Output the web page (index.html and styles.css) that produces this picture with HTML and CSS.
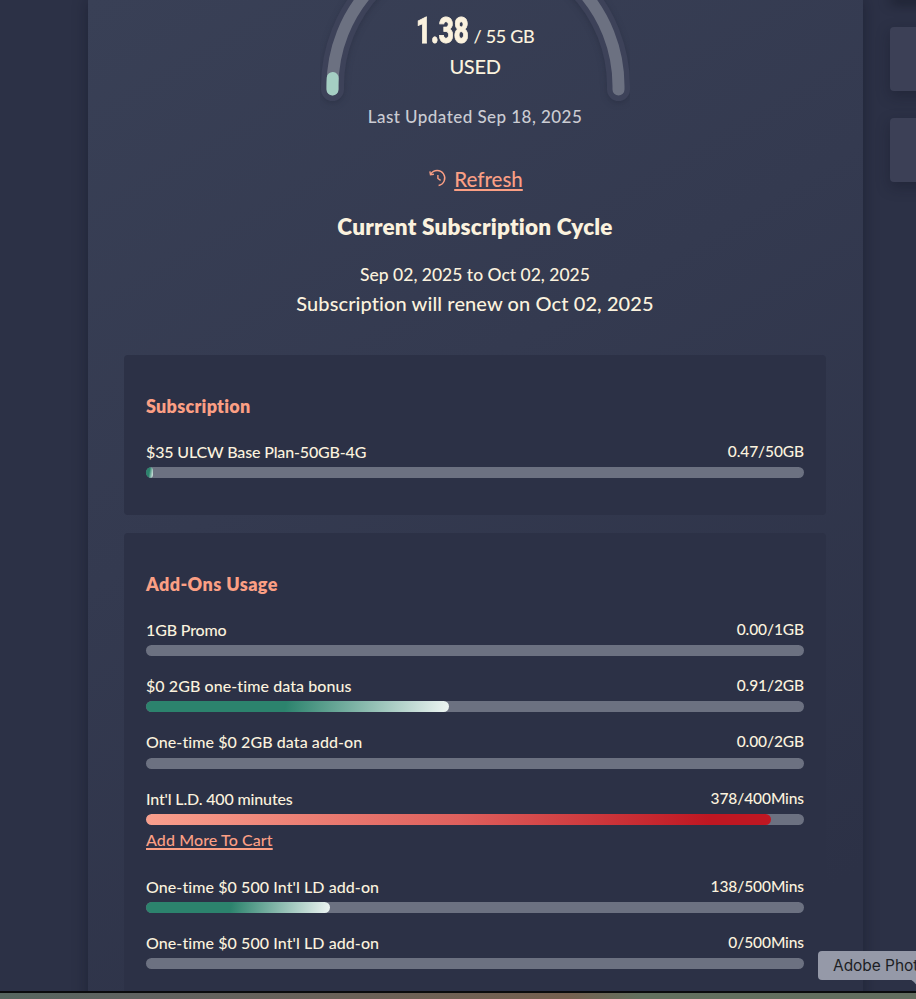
FILE: index.html
```
<!DOCTYPE html>
<html lang="en">
<head>
  <meta charset="utf-8">
  <title>Data Usage</title>
  <link rel="stylesheet" href="styles.css">
</head>
<body>
  <main class="page">
    <div class="usage-card">

      <!-- Gauge -->
      <section class="gauge">
        <svg class="gauge-arc" width="310" height="110" viewBox="0 0 310 110">
          <path class="arc-outline" d="M12.500 89.500 V86 A143 143 0 0 1 298.500 86 V89.500"/>
          <path class="arc-track" d="M12.500 89.500 V86 A143 143 0 0 1 298.500 86 V89.500"/>
          <path class="arc-value" d="M12.500 89.500 V86 A143 143 0 0 1 12.700 78"/>
        </svg>
        <div class="gauge-text">
          <div class="gauge-amount"><span class="gauge-used"><b>1.38</b></span><span class="gauge-total">/ 55 GB</span></div>
          <div class="gauge-label">USED</div>
        </div>
      </section>

      <p class="updated">Last Updated Sep 18, 2025</p>

      <div class="refresh">
        <svg width="18" height="18" viewBox="0 0 18 18">
          <path d="M1.800 4.900 A7.600 7.600 0 1 1 9.600 16.500"/>
          <path d="M0.900 2.300 L1.500 5.700 L4.900 5.200"/>
          <path d="M8.900 6 V9.500 L11.600 11.300"/>
        </svg>
        <a class="refresh-link">Refresh</a>
      </div>

      <h2 class="cycle-title">Current Subscription Cycle</h2>
      <p class="cycle-dates">Sep 02, 2025 to Oct 02, 2025</p>
      <p class="cycle-renew">Subscription will renew on Oct 02, 2025</p>

      <!-- Subscription -->
      <section class="panel panel-plan">
        <h3>Subscription</h3>
        <div class="usage">
          <div class="usage-text"><span class="name tight">$35 ULCW Base Plan-50GB-4G</span><span class="value">0.47/50GB</span></div>
          <div class="bar"><div class="fill green" style="width: 1%"></div></div>
        </div>
      </section>

      <!-- Add-ons -->
      <section class="panel panel-addons">
        <h3>Add-Ons Usage</h3>
        <div class="usage">
          <div class="usage-text"><span class="name tight">1GB Promo</span><span class="value">0.00/1GB</span></div>
          <div class="bar"></div>
        </div>
        <div class="usage">
          <div class="usage-text"><span class="name">$0 2GB one-time data bonus</span><span class="value">0.91/2GB</span></div>
          <div class="bar"><div class="fill green" style="width: 46%"></div></div>
        </div>
        <div class="usage">
          <div class="usage-text"><span class="name">One-time $0 2GB data add-on</span><span class="value">0.00/2GB</span></div>
          <div class="bar"></div>
        </div>
        <div class="usage usage-link">
          <div class="usage-text"><span class="name tight">Int'l L.D. 400 minutes</span><span class="value">378/400Mins</span></div>
          <div class="bar"><div class="fill red" style="width: 95%"></div></div>
          <a class="add-more">Add More To Cart</a>
        </div>
        <div class="usage">
          <div class="usage-text"><span class="name">One-time $0 500 Int'l LD add-on</span><span class="value">138/500Mins</span></div>
          <div class="bar"><div class="fill green" style="width: 28%"></div></div>
        </div>
        <div class="usage">
          <div class="usage-text"><span class="name">One-time $0 500 Int'l LD add-on</span><span class="value">0/500Mins</span></div>
          <div class="bar"></div>
        </div>
      </section>
    </div>

    <aside class="side">
      <div class="side-card side-top"></div>
      <div class="side-card"></div>
      <div class="side-card"></div>
    </aside>
  </main>

  <div class="desktop-edge"></div>
  <div class="dock-tip">Adobe Phot
    <svg class="dock-tip-arrow" width="14" height="10" viewBox="0 0 14 10"><path d="M0 0 H14 V10 Q10 8 6 3 Q3 0 0 0 Z"/></svg>
  </div>
</body>
</html>
```
FILE: styles.css
```
* {
  box-sizing: border-box;
}

body {
  margin: 0;
  height: 999px;
  overflow: hidden;
  position: relative;
  background-color: #2c3146;
  color: #fbf2de;
  font-family: Lato, "Open Sans", sans-serif;
  font-weight: 500;
  font-variant-ligatures: none;
}

h2, h3, p {
  margin: 0;
}

.page {
  display: flex;
  height: 991px;
  padding-left: 88px;
  overflow: hidden;
}

.usage-card {
  width: 775px;
  height: 1100px;
  flex-shrink: 0;
  padding: 0 37px 0 36px;
  text-align: center;
  background: linear-gradient(150deg, #394056 0%, #343a50 38%, #2c3146 85%);
  box-shadow: 0 0 14px rgba(10, 14, 28, 0.38);
}

/* Gauge */
.gauge {
  display: grid;
  justify-content: center;
  height: 104px;
}
.gauge-arc,
.gauge-text {
  grid-area: 1 / 1;
}
.gauge-arc path {
  fill: none;
  stroke-linecap: round;
}
.gauge-arc .arc-outline {
  stroke: #3d4259;
  stroke-width: 23;
  filter: drop-shadow(0 2px 3px rgba(20, 24, 40, 0.25));
}
.gauge-arc .arc-track {
  stroke: #6c7181;
  stroke-width: 12;
}
.gauge-arc .arc-value {
  stroke: #a5cfc3;
  stroke-width: 12;
}
.gauge-text {
  padding-top: 8px;
}
.gauge-amount {
  display: flex;
  justify-content: center;
  align-items: baseline;
  gap: 6px;
  height: 46px;
  line-height: 45px;
}
.gauge-used {
  width: 52px;
}
.gauge-used b {
  display: inline-block;
  font-family: Roboto, sans-serif;
  font-weight: 900;
  font-size: 37px;
  transform: scaleX(0.7);
  transform-origin: left;
  -webkit-text-stroke: 0.8px #fbf2de;
}
.gauge-total {
  font-size: 18px;
  letter-spacing: -0.3px;
}
.gauge-label {
  font-size: 20px;
  letter-spacing: -0.3px;
  line-height: 25px;
}

.updated {
  height: 26px;
  line-height: 25px;
  font-size: 17px;
  letter-spacing: 0.45px;
  color: #cbccd3;
}

.refresh {
  display: flex;
  justify-content: center;
  gap: 7px;
  margin-top: 35px;
  height: 29px;
  padding-left: 2px;
  line-height: 28px;
  font-size: 20.5px;
  color: #fb9f84;
}
.refresh svg {
  margin-top: 4px;
  fill: none;
  stroke: #fb9f84;
  stroke-width: 1.4;
}
.refresh-link,
.add-more {
  text-decoration: underline;
  text-decoration-thickness: 1.5px;
  text-underline-offset: 2px;
}

.cycle-title {
  margin-top: 18px;
  height: 30px;
  line-height: 30px;
  font-size: 22.5px;
  font-weight: 800;
  letter-spacing: 0.2px;
}
.cycle-dates {
  margin-top: 20px;
  height: 26px;
  line-height: 26px;
  font-size: 17.5px;
}
.cycle-renew {
  height: 32px;
  line-height: 30px;
  font-size: 20px;
  letter-spacing: 0.1px;
}

/* Usage panels */
.panel {
  padding: 39px 22px 0;
  text-align: left;
  background-color: #2c3146;
  border-radius: 4px;
}
.panel-plan {
  margin-top: 35px;
  height: 160px;
}
.panel-addons {
  margin-top: 18px;
  height: 520px;
}
.panel h3 {
  height: 24px;
  line-height: 24px;
  margin-bottom: 22px;
  font-size: 18px;
  font-weight: 800;
  letter-spacing: 0.25px;
  color: #fb9f84;
}
.panel-addons h3 {
  letter-spacing: 0.4px;
}
.usage {
  height: 56.200px;
}
.usage-link {
  height: 88.400px;
}
.usage-text {
  display: flex;
  justify-content: space-between;
  height: 27.300px;
  line-height: 23px;
  font-size: 16px;
}
.name {
  letter-spacing: 0.08px;
}
.name.tight {
  letter-spacing: -0.15px;
}
.value {
  font-size: 15.5px;
  letter-spacing: -0.1px;
}
.bar {
  height: 11px;
  border-radius: 6px;
  background-color: #6c7181;
  overflow: hidden;
}
.fill {
  height: 100%;
  border-radius: 6px;
}
.green {
  background: linear-gradient(100deg, #2c836d 46%, #edf4f2 100%);
}
.red {
  background: linear-gradient(90deg, #f99f8d 0%, #df605d 50%, #bf1722 90%);
}
.add-more {
  display: inline-block;
  margin-top: 3px;
  line-height: 24px;
  font-size: 16px;
  letter-spacing: 0.1px;
  color: #fb9f84;
}

/* Right column */
.side {
  flex-shrink: 0;
  padding-left: 27px;
}
.side-card {
  width: 80px;
  height: 64px;
  margin-top: 27px;
  border-radius: 4px;
  background-color: #3c4056;
  box-shadow: 0 5px 14px rgba(16, 20, 34, 0.35);
}
.side-top {
  height: 0;
  margin: 0 0 27px;
  box-shadow: 4px 0 12px 3px rgba(12, 15, 26, 0.7);
}

/* Desktop below the window */
.desktop-edge {
  height: 8px;
  border-top: 2px solid #0a0b0d;
  background: linear-gradient(90deg, #56665f 0%, #5f6260 15%, #75604f 62%, #62705e 70%, #626d5f 100%);
}
.dock-tip {
  position: absolute;
  left: 818px;
  top: 951px;
  width: 98px;
  height: 29px;
  padding-left: 15px;
  border-radius: 4px 0 0 4px;
  background-color: #9599a8;
  color: #1d1f25;
  font-family: Inter, sans-serif;
  font-weight: 400;
  font-size: 15.5px;
  letter-spacing: -0.05px;
  line-height: 29px;
  white-space: nowrap;
}
.dock-tip-arrow {
  position: absolute;
  left: 90px;
  top: 28px;
  fill: #9599a8;
}
```
